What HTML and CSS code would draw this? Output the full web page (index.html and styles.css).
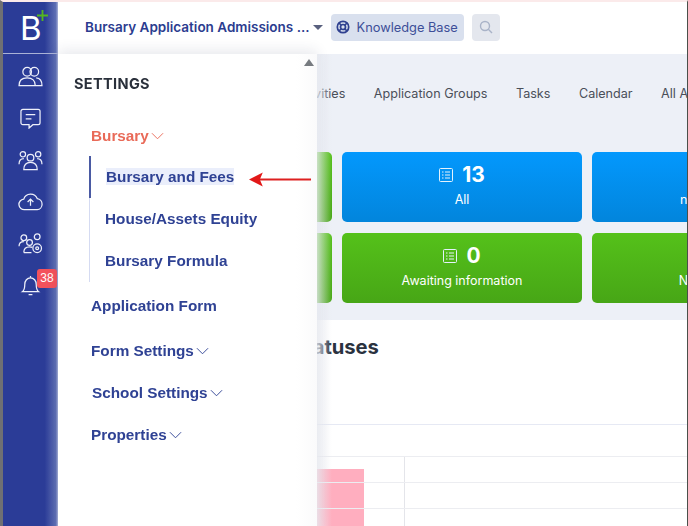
FILE: index.html
```html
<!DOCTYPE html>
<html lang="en">
<head>
<meta charset="utf-8">
<title>Bursary Settings</title>
<link rel="stylesheet" href="styles.css">
</head>
<body>
<div class="frame">
  <aside class="rail">
    <div class="logo">
      <span class="logo-b">B</span>
      <svg class="logo-plus" viewBox="0 0 12 12"><path d="M6 0v12M0 6h12"/></svg>
    </div>
    <nav class="rail-icons">
      <svg class="rail-icon" viewBox="0 0 26 22"><circle cx="9.500" cy="6" r="4.500"/><circle cx="17" cy="6" r="4.500"/><path d="M1 20.500c0-5 3-8 8.500-8s8.500 3 8.500 8zM19 12.500c3.500.2 6 3 6 8h-7"/></svg>
      <svg class="rail-icon" viewBox="0 0 22 22"><path d="M3 1.500h16a2 2 0 0 1 2 2v12a2 2 0 0 1-2 2h-5.500l-4 3.500v-3.500H3a2 2 0 0 1-2-2v-12a2 2 0 0 1 2-2z"/><path d="M6 7h10M6 11.500h6"/></svg>
      <svg class="rail-icon" viewBox="0 0 26 22"><circle cx="13" cy="8" r="3.500"/><circle cx="5" cy="4.500" r="2.800"/><circle cx="21" cy="4.500" r="2.800"/><path d="M6 20.500c0-5 2.500-7.500 7-7.500s7 2.500 7 7.500zM1 15c0-4 1.500-6 5-6M25 15c0-4-1.500-6-5-6"/></svg>
      <svg class="rail-icon" viewBox="0 0 26 20"><path d="M7 18.500a5.500 5.500 0 0 1-1-11A7.500 7.500 0 0 1 20 7a5.800 5.800 0 0 1 0 11.500z"/><path d="M13 14.500V8M10 10.500 13 7.500l3 3"/></svg>
      <svg class="rail-icon" viewBox="0 0 26 22"><circle cx="6" cy="5" r="3"/><circle cx="20" cy="4" r="3"/><circle cx="12" cy="10" r="3"/><path d="M1 14c0-3 1.500-5 5-5M6 20.500c0-4 2-6 6-6 1 0 2 .1 3 .5M6 20.500h8"/><circle cx="20" cy="16" r="4.500"/><circle cx="20" cy="16" r="1.500"/></svg>
      <div class="bell-wrap">
        <svg class="rail-icon" viewBox="0 0 20 22"><path d="M1.500 17.500c2-1.500 2.500-4 2.500-7.500 0-4 2.500-7 6-7s6 3 6 7c0 3.500.5 6 2.500 7.500z"/><path d="M10 1v2M8 20.500h4"/></svg>
        <span class="badge">38</span>
      </div>
    </nav>
  </aside>

  <div class="workspace">
    <header class="topbar">
      <span class="app-title">Bursary Application Admissions ...</span>
      <span class="caret"></span>
      <span class="kb-btn">
        <svg class="kb-icon" viewBox="0 0 14 14"><circle cx="7" cy="7" r="5.700"/><circle cx="7" cy="7" r="2.500"/><path d="M3 3l2.200 2.200M11 3 8.800 5.200M3 11l2.200-2.200M11 11 8.800 8.800"/></svg>
        Knowledge Base
      </span>
      <span class="search-btn">
        <svg class="search-icon" viewBox="0 0 14 14"><circle cx="6" cy="6" r="4.500"/><path d="M9.300 9.300 13 13"/></svg>
      </span>
    </header>

    <main class="content">
      <div class="tabs">
        <span class="tab">Activities</span>
        <span class="tab">Application Groups</span>
        <span class="tab">Tasks</span>
        <span class="tab">Calendar</span>
        <span class="tab">All Applications</span>
      </div>
      <div class="cards">
        <div class="card green"></div>
        <div class="card blue">
          <div class="card-top"><svg class="card-icon" viewBox="0 0 14 14"><rect x=".5" y=".5" width="13" height="13" rx="1"/><path d="M3 4h1.500M3 7h1.500M3 10h1.500M6 4h5M6 7h5M6 10h5"/></svg><span class="card-num">13</span></div>
          <div class="card-label">All</div>
        </div>
        <div class="card blue">
          <div class="card-top"><span class="card-num">1</span></div>
          <div class="card-label">not started</div>
        </div>
        <div class="card green"></div>
        <div class="card green">
          <div class="card-top"><svg class="card-icon" viewBox="0 0 14 14"><rect x=".5" y=".5" width="13" height="13" rx="1"/><path d="M3 4h1.500M3 7h1.500M3 10h1.500M6 4h5M6 7h5M6 10h5"/></svg><span class="card-num">0</span></div>
          <div class="card-label">Awaiting information</div>
        </div>
        <div class="card green">
          <div class="card-top"><span class="card-num">0</span></div>
          <div class="card-label">Not eligible</div>
        </div>
      </div>
      <section class="stats">
        <h2 class="stats-title">Bursary Application Statuses</h2>
        <div class="chart">
          <div class="chart-row"><span class="chart-bar"></span></div>
          <div class="chart-row"></div>
          <div class="chart-row"></div>
        </div>
      </section>
    </main>

    <aside class="settings">
      <span class="scroll-up"></span>
      <h1 class="settings-title">SETTINGS</h1>
      <div class="menu-head active">Bursary<svg class="chev" viewBox="0 0 14 8"><path d="M1 1l6 6 6-6"/></svg></div>
      <ul class="submenu">
        <li class="sub-item current"><span class="sub-text">Bursary and Fees</span></li>
        <li class="sub-item">House/Assets Equity</li>
        <li class="sub-item">Bursary Formula</li>
      </ul>
      <div class="menu-head first-after">Application Form</div>
      <div class="menu-head">Form Settings<svg class="chev" viewBox="0 0 14 8"><path d="M1 1l6 6 6-6"/></svg></div>
      <div class="menu-head school">School Settings<svg class="chev" viewBox="0 0 14 8"><path d="M1 1l6 6 6-6"/></svg></div>
      <div class="menu-head">Properties<svg class="chev" viewBox="0 0 14 8"><path d="M1 1l6 6 6-6"/></svg></div>
      <svg class="arrow" viewBox="0 0 64 14"><path class="arrow-line" d="M10 7h53"/><path class="arrow-head" d="M0 7l14-7-3 7 3 7z"/></svg>
    </aside>
  </div>
</div>
</body>
</html>
```

FILE: styles.css
```css
* { box-sizing: border-box; }
html, body { margin: 0; height: 100%; overflow: hidden; background: #fff; }
.frame {
  width: 688px; height: 526px; display: flex; overflow: hidden;
  border-left: 3px solid #6f7073; border-top: 2px solid #fbeaea; border-right: 1px solid #4a4f4a;
  font-family: Inter, "Liberation Sans", sans-serif;
  filter: blur(.4px);
}
.rail {
  width: 55px; flex: none; display: flex; flex-direction: column;
  background: linear-gradient(90deg, #2b3c97 0, #2b3c97 76%, #5f6fb4 96%, #aab3d8 100%);
}
.logo { height: 52px; flex: none; position: relative; border-bottom: 1px solid #aab2d6; }
.logo-b { position: absolute; left: 17px; top: 8px; font: 400 33px/36px Inter, sans-serif; color: #fff; }
.logo-plus { position: absolute; left: 34px; top: 8px; width: 11px; height: 11px; fill: none; stroke: #55b71e; stroke-width: 2; }
.rail-icons { display: flex; flex-direction: column; align-items: center; padding: 12px 0 0; gap: 20.800px; }
.rail-icon { width: 25px; height: 21px; fill: none; stroke: #eef0fa; stroke-width: 1.300; display: block; }
.bell-wrap { position: relative; }
.badge {
  position: absolute; left: 19px; top: -6px; width: 20px; height: 19px; border-radius: 3px;
  background: #f4525c; color: #fff; font: 400 12px/19px "Liberation Sans", sans-serif; text-align: center;
}
.workspace { flex: 1; min-width: 0; position: relative; display: flex; flex-direction: column; }
.topbar { height: 52px; flex: none; display: flex; align-items: center; padding: 0 0 2px 27px; background: #fff; }
.app-title { font-size: 13.500px; font-weight: 600; color: #2b3c8f; white-space: nowrap; }
.caret { width: 0; height: 0; margin-left: 3px; border: 5px solid transparent; border-top: 5px solid #59607e; border-bottom: 0; }
.kb-btn {
  display: flex; align-items: center; gap: 7px; height: 27px; margin-left: 8px; padding: 0 6px 0 5px;
  background: #d9e0ee; border-radius: 4px; color: #3d4e98; font-size: 12.800px; white-space: nowrap;
}
.kb-icon { width: 14px; height: 14px; fill: none; stroke: #2f4090; stroke-width: 1.700; }
.search-btn { width: 28px; height: 27px; margin-left: 8px; display: flex; align-items: center; justify-content: center; background: #e4e7ee; border-radius: 4px; }
.search-icon { width: 14px; height: 14px; fill: none; stroke: #a9b3c8; stroke-width: 1.400; }
.content { flex: 1; min-height: 0; background: #edf0f7; display: flex; flex-direction: column; }
.tabs { height: 98px; flex: none; display: flex; gap: 28.500px; padding: 32px 0 0 233px; font-size: 12.600px; color: #4a4f59; white-space: nowrap; }
.tab { line-height: 16px; }
.cards { display: grid; grid-template-columns: repeat(3, 240px); grid-auto-rows: 70px; gap: 11px 10px; padding-left: 34px; height: 168px; flex: none; }
.card { border-radius: 5px; display: flex; flex-direction: column; align-items: center; color: #fff; padding-top: 10px; }
.blue { background: linear-gradient(180deg, #0398fd 0, #0285dc 100%); }
.green { background: linear-gradient(180deg, #55c11a 0, #47a616 100%); }
.card-top { display: flex; align-items: center; gap: 9px; height: 26px; }
.card-icon { width: 14px; height: 14px; fill: none; stroke: #e4f2fc; stroke-width: 1; }
.card-num { font-size: 21px; font-weight: 700; line-height: 26px; }
.card-label { font-size: 12.500px; line-height: 17px; margin-top: 3px; white-space: nowrap; }
.stats { flex: 1; background: #fff; min-height: 0; padding: 14px 0 0 34px; }
.stats-title { margin: 0; font-size: 20.150px; line-height: 26px; font-weight: 700; color: #2a323f; white-space: nowrap; }
.chart { margin: 64px 0 0 -34px; border-top: 1px solid #e6e9f4; padding-top: 31px; }
.chart-row { height: 26px; border-top: 1px solid #ecedf1; position: relative; }
.chart-row::after { content: ""; position: absolute; left: 346px; top: 0; bottom: -1px; width: 1px; background: #e4e5ea; }
.chart-bar { position: absolute; left: 60px; top: 12px; width: 246px; height: 70px; background: #ffaebf; }
.settings {
  position: absolute; left: 0; top: 52px; bottom: 0; width: 259px;
  box-shadow: 0 -4px 12px rgba(40,50,90,.10); padding: 21px 0 0 16px;
  background: linear-gradient(90deg, #fff 0, #fff 92%, #fafafb 100%);
}
.settings::after {
  content: ""; position: absolute; left: 100%; top: 0; bottom: 0; width: 15px;
  background: linear-gradient(90deg, rgba(232,234,240,.8) 0, rgba(232,234,240,0) 100%);
}
.scroll-up { position: absolute; right: 3px; top: 5px; width: 0; height: 0; border: 5px solid transparent; border-bottom: 7px solid #777b80; border-top: 0; }
.settings-title { margin: 0 0 33px; font-size: 14.500px; line-height: 18px; font-weight: 700; letter-spacing: .35px; color: #2a303b; }
.menu-head {
  display: flex; align-items: center; height: 20px; margin: 0 0 22px 17px;
  font: 700 15.300px/20px "Liberation Sans", sans-serif; color: #2f4294; white-space: nowrap;
}
.menu-head.active { color: #e96a58; margin-bottom: 0; }
.menu-head.first-after { margin-bottom: 25px; }
.menu-head.school { margin-left: 18px; }
.chev { width: 13px; height: 8px; margin-left: 2px; fill: none; stroke: currentColor; stroke-width: 1; }
.submenu {
  list-style: none; margin: 10px 0 14px 15px; padding: 0 0 0 15px; width: 200px; height: 126px;
  position: relative; border-left: 1px solid #d5dbf2;
}
.submenu::before { content: ""; position: absolute; left: -1px; top: 0; width: 1.500px; height: 42px; background: #4a5aa3; }
.sub-item { height: 42px; padding-top: 11px; font: 700 15.300px/20px "Liberation Sans", sans-serif; color: #2f4294; white-space: nowrap; }
.current { padding-left: 1px; }
.sub-text { background: #eaeefb; }
.arrow { position: absolute; left: 191px; top: 118px; width: 63px; height: 15px; }
.arrow-line { stroke: #dd2020; stroke-width: 2; fill: none; }
.arrow-head { fill: #e21818; }
```
